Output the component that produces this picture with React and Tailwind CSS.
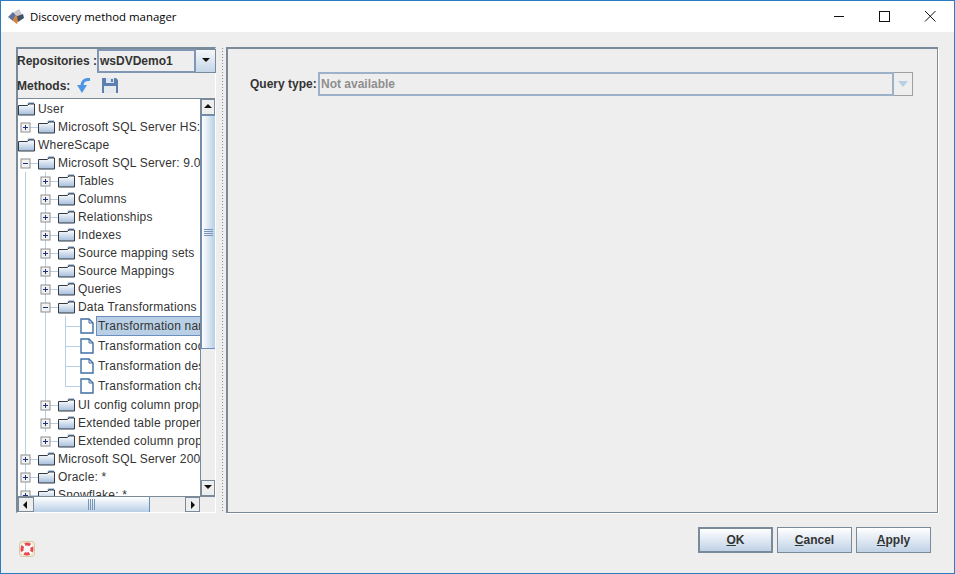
import React from 'react';

const font = "font-['Liberation_Sans',Arial,sans-serif]";

function Folder() {
    return (
        <svg width="17" height="14" viewBox="0 0 17 14" className="shrink-0">
            <defs>
                <linearGradient id="fold" x1="0" y1="0" x2="0" y2="1">
                    <stop offset="0" stopColor="#ffffff" />
                    <stop offset="1" stopColor="#a3bcdb" />
                </linearGradient>
            </defs>
            <path d="M10.500 0.500h5.500v2h-7z" fill="#6f8fb4" />
            <path d="M0.500 3.500h9l1.500-1.500h5.500v11h-16z" fill="url(#fold)" stroke="#333a44" />
        </svg>
    );
}

function Leaf() {
    return (
        <svg width="14" height="16" viewBox="0 0 14 16" className="shrink-0">
            <path d="M1 1h8l4 4v10h-12z" fill="#ffffff" stroke="#3f6fa3" strokeWidth="1.400" />
            <path d="M9 1v4h4" fill="none" stroke="#3f6fa3" />
        </svg>
    );
}

// vertical guide lines (x is relative to the tree's left edge) plus the handle of a row
function Gutter({ width, height, lines = [], handle, elbow, open }) {
    const mid = Math.floor(height / 2) + 0.5;
    return (
        <svg width={width} height={height} className="shrink-0">
            {lines.map((x) => (
                <line key={x} x1={x + 0.5} y1="0" x2={x + 0.5} y2={height} stroke="#b8cfe5" />
            ))}
            {elbow !== undefined && (
                <g stroke="#b8cfe5">
                    <line x1={elbow + 0.5} y1="0" x2={elbow + 0.5} y2={mid} />
                    <line x1={elbow} y1={mid} x2={width} y2={mid} />
                </g>
            )}
            {handle !== undefined && (
                <g>
                    <line x1={handle + 4} y1={mid} x2={width} y2={mid} stroke="#b8cfe5" />
                    <rect x={handle - 4} y={mid - 4.5} width="9" height="9" fill="#f2f2f2" stroke="#8e8e8e" />
                    <line x1={handle - 2} y1={mid} x2={handle + 3} y2={mid} stroke="#1f2f7a" />
                    {!open && <line x1={handle + 0.5} y1={mid - 2.5} x2={handle + 0.5} y2={mid + 2.5} stroke="#1f2f7a" />}
                </g>
            )}
        </svg>
    );
}

function TreeRow({ label, gutter, leaf, selected, height = 18 }) {
    return (
        <div className="flex items-center shrink-0 whitespace-nowrap" style={{ height }}>
            {gutter && <Gutter height={height} {...gutter} />}
            {leaf ? <Leaf /> : <Folder />}
            <span
                className={`text-[12px] leading-[14px] tracking-[0.2px] text-[#333333] ${leaf ? 'ml-[3px] pl-[1px] py-[2px]' : 'ml-[3px]'} ${
                    selected ? 'bg-[#b8cfe5] outline outline-[#6b8fbd] w-[110px]' : ''
                }`}
            >
                {label}
            </span>
        </div>
    );
}

const level2 = ['Tables', 'Columns', 'Relationships', 'Indexes', 'Source mapping sets', 'Source Mappings', 'Queries'];
const level2After = ['UI config column properties', 'Extended table properties', 'Extended column properties'];
const leaves = ['Transformation name', 'Transformation code', 'Transformation description', 'Transformation change'];

function ArrowButton({ dir, className = '' }) {
    const paths = { up: 'M1 6l4-4 4 4z', down: 'M1 2h8l-4 4z', left: 'M6 1v8l-4-4z', right: 'M3 1v8l4-4z' };
    return (
        <div className={`shrink-0 flex items-center justify-center border border-[#7a8a99] ${className}`}>
            <svg width="10" height="10" viewBox="0 0 10 10">
                <path d={paths[dir]} fill="#111111" />
            </svg>
        </div>
    );
}

function Tree() {
    return (
        <div className="flex-1 min-w-0 overflow-hidden bg-white flex flex-col pt-px">
            <TreeRow label="User" />
            <TreeRow label="Microsoft SQL Server HS: 9.0 - 2005" gutter={{ width: 20, handle: 7 }} />
            <TreeRow label="WhereScape" />
            <TreeRow label="Microsoft SQL Server: 9.0 - 2005" gutter={{ width: 20, handle: 7, open: true }} />
            {level2.map((name) => (
                <TreeRow key={name} label={name} gutter={{ width: 40, handle: 27, lines: [7, 27] }} />
            ))}
            <TreeRow label="Data Transformations" gutter={{ width: 40, handle: 27, open: true, lines: [7, 27] }} />
            {leaves.map((name, i) => (
                <TreeRow
                    key={name}
                    label={name}
                    leaf
                    selected={i === 0}
                    height={20}
                    gutter={{ width: 62, lines: i < 3 ? [7, 27, 47] : [7, 27], elbow: 47 }}
                />
            ))}
            {level2After.map((name, i) => (
                <TreeRow key={name} label={name} gutter={{ width: 40, handle: 27, lines: i < 2 ? [7, 27] : [7] }} />
            ))}
            <TreeRow label="Microsoft SQL Server 2000" gutter={{ width: 20, handle: 7, lines: [7] }} />
            <TreeRow label="Oracle: *" gutter={{ width: 20, handle: 7, lines: [7] }} />
            <TreeRow label="Snowflake: *" gutter={{ width: 20, handle: 7, lines: [7] }} />
        </div>
    );
}

function Grip({ vertical }) {
    return (
        <div className={`flex ${vertical ? 'flex-col gap-[1px]' : 'gap-[1px]'}`}>
            {[0, 1, 2, 3].map((i) => (
                <div key={i} className={`bg-[#7a94b8] ${vertical ? 'w-[9px] h-px' : 'w-px h-[11px]'}`} />
            ))}
        </div>
    );
}

function Button({ children, isDefault }) {
    return (
        <button
            className={`w-[75px] h-[26px] flex items-center justify-center text-[12px] font-bold text-[#333333] bg-gradient-to-b from-white to-[#c0d2e6] ${
                isDefault ? 'border-2 border-[#7a8a99]' : 'border border-[#7a8a99]'
            }`}
        >
            {children}
        </button>
    );
}

export default function App() {
    return (
        <div className={`w-[955px] h-[574px] flex flex-col bg-[#eeeeee] border border-[#2c7cc1] border-b-0 overflow-hidden ${font}`}>
            {/* title bar */}
            <div className="h-[31px] shrink-0 bg-white flex items-center">
                <svg width="16" height="15" viewBox="0 0 16 15" className="ml-[7px] mr-[6px]">
                    <path d="M0 8l5-5 3 3-3 6z" fill="#5f7396" />
                    <path d="M6 3l5-3 3 5-5 2z" fill="#c8c8d0" />
                    <path d="M5 12l3-6 3 2-2 7z" fill="#d9812e" />
                    <path d="M9 7l6-2 1 4-6 4z" fill="#3f4f6e" />
                </svg>
                <span className="text-[11.4px] text-black font-['Open_Sans',sans-serif]">Discovery method manager</span>
                <div className="ml-auto flex items-center">
                    <svg width="46" height="30" viewBox="0 0 46 30"><line x1="18" y1="14.500" x2="28" y2="14.500" stroke="#111" /></svg>
                    <svg width="46" height="30" viewBox="0 0 46 30"><rect x="17.500" y="9.500" width="10" height="10" fill="none" stroke="#111" /></svg>
                    <svg width="46" height="30" viewBox="0 0 46 30"><path d="M17 9l10.500 10.500M27.500 9l-10.500 10.500" stroke="#111" fill="none" /></svg>
                </div>
            </div>

            {/* split area */}
            <div className="flex mt-[15px] ml-[15px] h-[466px] w-[922px]">
                <div className="w-[200px] shrink-0 flex flex-col border-l-2 border-t-2 border-[#7a8a99] border-r border-r-white border-b border-b-white">
                    <div className="h-[24px] flex items-center shrink-0 -ml-px">
                        <span className="w-[81px] text-[12px] font-bold text-[#333333] whitespace-nowrap">Repositories :</span>
                        <div className="w-[99px] h-[24px] shrink-0 flex items-center border-2 border-[#7f97b4] bg-[#eeeeee] pl-[1px] text-[12px] font-bold text-[#333333]">wsDVDemo1</div>
                        <ArrowButton dir="down" className="w-[20px] h-[24px] border-l-0 bg-gradient-to-b from-[#f4f7fa] to-[#c5d6e8]" />
                    </div>
                    <div className="h-[25px] flex items-center shrink-0 -ml-px">
                        <span className="w-[52px] text-[12px] font-bold text-[#333333]">Methods:</span>
                        <svg width="14" height="15" viewBox="0 0 14 15" className="ml-[8px]">
                            <path d="M13 1.500C8 1 5 3 5 8" fill="none" stroke="#4d96e6" strokeWidth="3" />
                            <path d="M0 7h10l-5 8z" fill="#4d96e6" />
                        </svg>
                        <svg width="16" height="15" viewBox="0 0 16 15" className="ml-[11px]">
                            <path d="M0 0h14l2 2v13H0z" fill="#5b7fae" />
                            <rect x="4" y="0" width="8" height="5" fill="#dbe6f2" />
                            <rect x="9" y="1" width="2" height="3" fill="#5b7fae" />
                            <rect x="2" y="8" width="12" height="7" fill="#e6e9ee" />
                        </svg>
                    </div>
                    <div className="flex-1 min-h-0 flex flex-col border-t border-[#7a8a99]">
                        <div className="flex-1 min-h-0 flex">
                            <Tree />
                            <div className="w-[15px] shrink-0 flex flex-col bg-[#eeeeee] border-l border-[#7a8a99]">
                                <ArrowButton dir="up" className="h-[16px]" />
                                <div className="h-[234px] shrink-0 flex items-center justify-center bg-gradient-to-r from-white to-[#b8cfe5] border border-[#6b8fbd] border-r-0">
                                    <Grip vertical />
                                </div>
                                <div className="flex-1" />
                                <ArrowButton dir="down" className="h-[16px]" />
                            </div>
                        </div>
                        <div className="h-[16px] shrink-0 flex border-t border-[#7a8a99] bg-[#eeeeee]">
                            <ArrowButton dir="left" className="w-[16px]" />
                            <div className="w-[116px] shrink-0 flex items-center justify-center bg-gradient-to-b from-white to-[#b8cfe5] border-r border-[#6b8fbd]">
                                <Grip />
                            </div>
                            <div className="flex-1" />
                            <ArrowButton dir="right" className="w-[15px]" />
                            <div className="w-[15px] shrink-0" />
                        </div>
                    </div>
                </div>

                {/* divider */}
                <div className="w-[10px] shrink-0 flex pl-[5px]">
                    <div className="w-[3px] h-full bg-[radial-gradient(#8a8a8a_0.7px,transparent_0.8px)] bg-[length:3px_3px]" />
                </div>

                {/* right panel */}
                <div className="flex-1 min-w-0 border-l-2 border-t-2 border-[#7a8a99] border-r border-r-[#8a8a8a] border-b border-b-[#7a8a99] shadow-[1px_1px_0_#ffffff]">
                    <div className="flex items-center mt-[23px] ml-[22px]">
                        <span className="w-[68px] text-[12px] font-bold text-[#333333] whitespace-nowrap">Query type:</span>
                        <div className="w-[576px] h-[24px] flex items-center border-2 border-[#9db2c9] bg-[#eeeeee] pl-[1px] text-[12px] font-bold text-[#8e8e8e]">Not available</div>
                        <div className="w-[19px] h-[24px] flex items-center justify-center border border-l-0 border-[#a0a0a0]">
                            <svg width="10" height="6" viewBox="0 0 10 6"><path d="M0 0h10l-5 6z" fill="#b8cfe5" /></svg>
                        </div>
                    </div>
                </div>
            </div>

            {/* bottom bar */}
            <div className="flex-1 flex items-start">
                <svg width="16" height="16" viewBox="0 0 16 16" className="ml-[18px] mt-[28px]">
                    <rect x="0.500" y="0.500" width="15" height="15" rx="3" fill="#f3ead6" stroke="#d8c8a0" />
                    <circle cx="8" cy="8" r="5" fill="#f7f7f7" stroke="#ffffff" strokeWidth="3" />
                    <circle cx="8" cy="8" r="5" fill="none" stroke="#e5484d" strokeWidth="3" strokeDasharray="5.500 2.354" strokeDashoffset="2.750" />
                </svg>
                <div className="ml-auto mr-[23px] mt-[14px] flex gap-[4px]">
                    <Button isDefault><span><u>O</u>K</span></Button>
                    <Button><span><u>C</u>ancel</span></Button>
                    <Button><span><u>A</u>pply</span></Button>
                </div>
            </div>
            <div className="h-px shrink-0 bg-[#2c7cc1]" />
        </div>
    );
}
